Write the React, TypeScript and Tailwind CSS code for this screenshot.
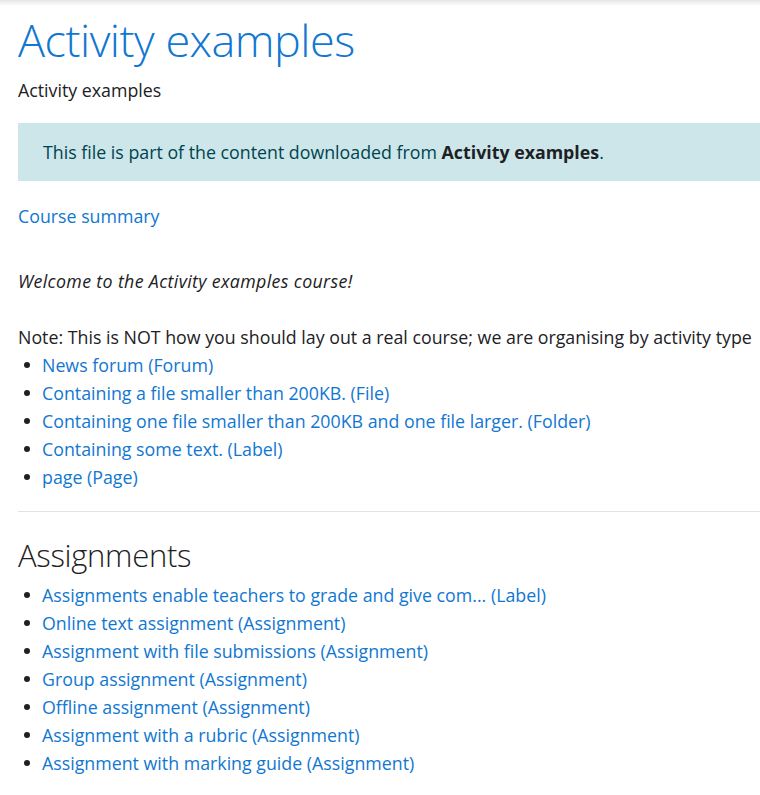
import React from "react";

const linkCls = "text-[#1177d1] hover:underline";

function Bullet({ children }: { children: React.ReactNode }) {
  return (
    <li className="flex items-center h-[28px]">
      <span className="w-[24px] flex justify-start pl-[6px] shrink-0">
        <span className="block w-[6px] h-[6px] rounded-full bg-[#1d2125]" />
      </span>
      <a href="#" className={linkCls}>{children}</a>
    </li>
  );
}

export default function App() {
  const first = [
    "News forum (Forum)",
    "Containing a file smaller than 200KB. (File)",
    "Containing one file smaller than 200KB and one file larger. (Folder)",
    "Containing some text. (Label)",
    "page (Page)",
  ];
  const assign = [
    "Assignments enable teachers to grade and give com... (Label)",
    "Online text assignment (Assignment)",
    "Assignment with file submissions (Assignment)",
    "Group assignment (Assignment)",
    "Offline assignment (Assignment)",
    "Assignment with a rubric (Assignment)",
    "Assignment with marking guide (Assignment)",
  ];
  return (
    <div className="relative w-[760px] h-[795px] overflow-hidden bg-white text-[#1d2125] text-[17.8px] leading-[28px] [font-family:'Open_Sans',sans-serif]">
      <div className="absolute top-0 left-0 right-0 h-[6px] bg-gradient-to-b from-[#e6e6e6] to-white" />
      <div className="pl-[18px] w-[1000px]">
        <h1 className="text-[#1177d1] font-light text-[45px] tracking-[-0.5px] leading-[60px] pt-[10px]">Activity examples</h1>
        <div className="mt-[6px]">Activity examples</div>
        <div className="mt-[19px] bg-[#cce6ea] text-[#00434e] py-[15px] px-[25px]">
          This file is part of the content downloaded from <b className="font-bold text-[#1d2125]">Activity examples</b>.
        </div>
        <div className="mt-[21px]"><a href="#" className={linkCls}>Course summary</a></div>
        <p className="mt-[37px] italic tracking-[0.35px]">Welcome to the Activity examples course!</p>
        <p className="mt-[28px] whitespace-nowrap">Note: This is NOT how you should lay out a real course; we are organising by activity type</p>
        <ul>
          {first.map((t) => <Bullet key={t}>{t}</Bullet>)}
        </ul>
        <hr className="mt-[20px] border-0 border-t border-[#e3e3e3]" />
        <h2 className="font-light text-[31px] tracking-[-0.3px] leading-[42px] mt-[22px]">Assignments</h2>
        <ul className="mt-[5px]">
          {assign.map((t) => <Bullet key={t}>{t}</Bullet>)}
        </ul>
      </div>
    </div>
  );
}
